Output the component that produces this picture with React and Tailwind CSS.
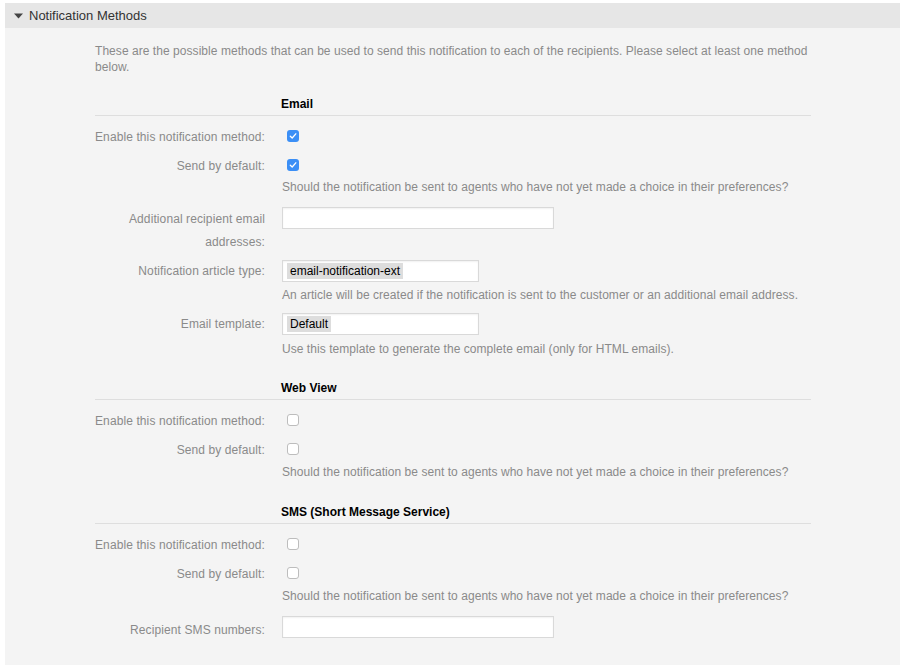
import React from "react";

const font = { fontFamily: '"Liberation Sans", Arial, sans-serif' };

function Check({ checked }) {
  if (checked) {
    return (
      <span className="ml-[5px] mt-[4px] flex h-[12px] w-[12px] items-center justify-center rounded-[3px] bg-[#3b8ff6]">
        <svg width="8" height="8" viewBox="0 0 8 8">
          <path d="M1.3 4.2 L3.2 6 L6.8 1.8" fill="none" stroke="#fff" strokeWidth="1.3" strokeLinecap="round" strokeLinejoin="round" />
        </svg>
      </span>
    );
  }
  return (
    <span className="ml-[5px] mt-[4px] block h-[12px] w-[12px] rounded-[3px] border border-[#bdbdbd] bg-white" />
  );
}

function Label({ children, className = "" }) {
  return (
    <div className={"w-[170px] shrink-0 text-right leading-[23px] tracking-[0.1px] text-[#8a8a8a] " + className}>{children}</div>
  );
}

function Row({ label, children, className = "", labelClass = "" }) {
  return (
    <div className={"flex " + className}>
      <Label className={labelClass}>{label}</Label>
      <div className="ml-[17px] flex min-h-[23px] items-start">{children}</div>
    </div>
  );
}

function Desc({ children, className = "" }) {
  return <div className={"ml-[187px] leading-[16px] tracking-[0.05px] text-[#8a8a8a] " + className}>{children}</div>;
}

function Heading({ children, className = "" }) {
  return (
    <div className={"border-b border-[#dedede] pb-[3px] pl-[186px] font-bold leading-[16px] text-black " + className}>
      {children}
    </div>
  );
}

function Input({ w, tag }) {
  return (
    <div className={"flex h-[22px] items-center border border-[#d9d9d9] bg-white shadow-[inset_0_1px_2px_rgba(0,0,0,0.06)] " + w}>
      {tag && <span className="ml-[4px] bg-[#dddddd] px-[3px] leading-[16px] text-black">{tag}</span>}
    </div>
  );
}

const prefText = "Should the notification be sent to agents who have not yet made a choice in their preferences?";

export default function App() {
  return (
    <div className="min-h-[665px] bg-white pt-[3px] text-[12px]" style={font}>
      <div className="mx-[5px] w-[895px] bg-[#f4f4f4]">
        <div className="flex h-[25px] items-center bg-[#e6e6e6] pl-[9px] text-[13px] text-[#333]">
          <svg width="9" height="6" viewBox="0 0 9 6" className="mr-[6px]">
            <path d="M0 0.5 L9 0.5 L4.5 5.5 Z" fill="#444" />
          </svg>
          Notification Methods
        </div>
        <div className="pb-[23px] pl-[90px] pr-[89px] pt-[15px]">
          <div className="leading-[16px] tracking-[0.05px] text-[#8a8a8a]">
            These are the possible methods that can be used to send this notification to each of the recipients. Please select at least one method below.
          </div>

          <Heading className="mt-[21px]">Email</Heading>
          <Row label="Enable this notification method:" className="mt-[10px]">
            <Check checked />
          </Row>
          <Row label="Send by default:" className="mt-[6px]">
            <Check checked />
          </Row>
          <Desc className="mt-[1px]">{prefText}</Desc>
          <Row label={<>Additional recipient email<br />addresses:</>} className="mt-[12px]" labelClass="pt-[1px]">
            <Input w="w-[272px]" />
          </Row>
          <Row label="Notification article type:" className="mt-[6px]">
            <Input w="w-[197px]" tag="email-notification-ext" />
          </Row>
          <Desc className="mt-[4px]">An article will be created if the notification is sent to the customer or an additional email address.</Desc>
          <Row label="Email template:" className="mt-[10px]">
            <Input w="w-[197px]" tag="Default" />
          </Row>
          <Desc className="mt-[5px]">Use this template to generate the complete email (only for HTML emails).</Desc>

          <Heading className="mt-[23px]">Web View</Heading>
          <Row label="Enable this notification method:" className="mt-[10px]">
            <Check />
          </Row>
          <Row label="Send by default:" className="mt-[6px]">
            <Check />
          </Row>
          <Desc className="mt-[2px]">{prefText}</Desc>

          <Heading className="mt-[24px]">SMS (Short Message Service)</Heading>
          <Row label="Enable this notification method:" className="mt-[10px]">
            <Check />
          </Row>
          <Row label="Send by default:" className="mt-[6px]">
            <Check />
          </Row>
          <Desc className="mt-[2px]">{prefText}</Desc>
          <Row label="Recipient SMS numbers:" className="mt-[12px]" labelClass="pt-[3px]">
            <Input w="w-[272px]" />
          </Row>
        </div>
      </div>
    </div>
  );
}
